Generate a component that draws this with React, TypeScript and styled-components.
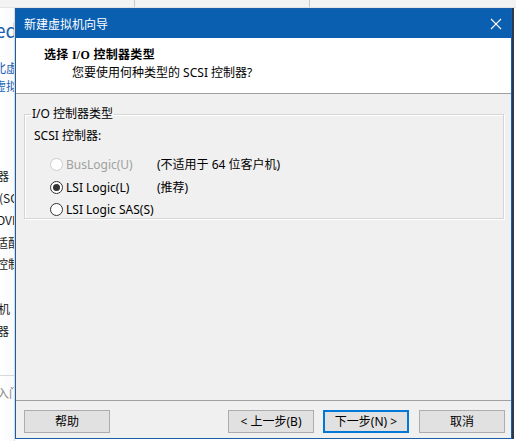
import React from 'react'
import styled, { createGlobalStyle } from 'styled-components'

const GlobalStyle = createGlobalStyle`
  html, body {
    margin: 0;
    padding: 0;
    background: #ffffff;
  }
  body {
    font-family: "Noto Sans", "Noto Sans CJK SC", sans-serif;
    font-size: 12px;
    color: #000;
  }
`

const Desktop = styled.div`
  position: relative;
  width: 516px;
  height: 441px;
  overflow: hidden;
  background: #ffffff;
`

const BackWindow = styled.div`
  display: flex;
  flex-direction: column;
  height: 100%;
`

const BackTabs = styled.div`
  display: flex;
  height: 7px;
  background: #f3f3f3;
  border-bottom: 1px solid #e3e3e3;
`

const BackTab = styled.div<{ $w: number }>`
  width: ${(p) => p.$w}px;
  border-right: 1px solid #c8c8c8;
`

const BackSide = styled.div`
  display: flex;
  flex-direction: column;
  width: 14px;
  flex: 1;
  overflow: hidden;
  border-right: 1px solid #dadada;
  background: linear-gradient(to right, #ffffff, #f7f9fc);
`

const BackLine = styled.div<{ $top: number; $shift: number; $color?: string; $size?: number }>`
  margin-top: ${(p) => p.$top}px;
  margin-left: ${(p) => p.$shift}px;
  height: 16px;
  line-height: 16px;
  white-space: nowrap;
  font-family: "Noto Sans CJK SC", sans-serif;
  font-size: ${(p) => p.$size ?? 12}px;
  color: ${(p) => p.$color ?? '#1a1a1a'};
`

const BackRule = styled.div<{ $top: number }>`
  margin-top: ${(p) => p.$top}px;
  height: 1px;
  background: #d8d8d8;
`

const Dialog = styled.div`
  position: absolute;
  left: 15px;
  top: 8px;
  width: 497px;
  height: 431px;
  box-sizing: border-box;
  border: 1px solid #1a5ea8;
  display: flex;
  flex-direction: column;
  background: #f0f0f0;
  box-shadow: 2px 0 0 #2b3a4a;
`

const TitleBar = styled.div`
  height: 29px;
  background: #0b5fb0;
  display: flex;
  align-items: center;
  justify-content: space-between;
  padding: 0 9px 0 8px;
  color: #ffffff;
  font-family: "Noto Sans CJK SC", sans-serif;
  font-size: 12px;
`

const CloseIcon = styled.svg`
  width: 12px;
  height: 12px;
  display: block;
`

const Header = styled.div`
  height: 56px;
  background: #ffffff;
  border-bottom: 1px solid #a0a0a0;
  display: flex;
  flex-direction: column;
  padding-top: 8px;
  box-sizing: border-box;
`

const HeaderTitle = styled.div`
  margin-left: 28px;
  height: 18px;
  line-height: 18px;
  font-family: "Liberation Serif", "Noto Sans CJK SC", serif;
  font-weight: bold;
  font-size: 12px;
  letter-spacing: 0.3px;
`

const HeaderSub = styled.div`
  margin-left: 56px;
  height: 18px;
  line-height: 18px;
  font-family: "Noto Sans", "Noto Sans CJK SC", sans-serif;
  font-size: 12px;
`

const Body = styled.div`
  flex: 1;
  padding: 12px 7px 0 8px;
`

const Group = styled.fieldset`
  margin: 0;
  padding: 0 0 1px 9px;
  border: 1px solid #d5d5d5;
  box-shadow: inset 1px 1px 0 #ffffff, 1px 1px 0 #ffffff;
`

const Legend = styled.legend`
  margin-left: -3px;
  padding: 0 1px;
  line-height: 16px;
  font-size: 12px;
`

const Fields = styled.div`
  display: flex;
  flex-direction: column;
  gap: 7px;
`

const FieldLabel = styled.div`
  line-height: 16px;
  height: 16px;
  margin-top: 6px;
  margin-bottom: 4px;
`

const RadioRow = styled.label<{ $disabled?: boolean }>`
  display: grid;
  grid-template-columns: 107px auto;
  align-items: center;
  height: 16px;
  margin-left: 16px;
  color: ${(p) => (p.$disabled ? '#a0a0a0' : '#000')};
`

const RadioMain = styled.span`
  display: flex;
  align-items: center;
  gap: 3px;
`

const Circle = styled.span<{ $checked?: boolean; $disabled?: boolean }>`
  width: 13px;
  height: 13px;
  box-sizing: border-box;
  border-radius: 50%;
  border: 1px solid ${(p) => (p.$disabled ? '#cccccc' : '#333333')};
  background: #ffffff;
  display: flex;
  align-items: center;
  justify-content: center;
  &::after {
    content: '';
    display: ${(p) => (p.$checked ? 'block' : 'none')};
    width: 7px;
    height: 7px;
    border-radius: 50%;
    background: #333333;
  }
`

const Note = styled.span`
  color: #000;
`

const Footer = styled.div`
  height: 38px;
  border-top: 1px solid #a0a0a0;
  box-sizing: border-box;
  display: flex;
  align-items: flex-start;
  padding: 9px 6px 0 8px;
`

const Spacer = styled.div`
  flex: 1;
`

const Button = styled.button<{ $primary?: boolean; $gap?: number }>`
  width: 86px;
  height: 23px;
  margin-left: ${(p) => p.$gap ?? 0}px;
  box-sizing: border-box;
  background: #e1e1e1;
  border: 1px solid ${(p) => (p.$primary ? '#0078d7' : '#adadad')};
  box-shadow: ${(p) => (p.$primary ? 'inset 0 0 0 1px #0078d7' : 'none')};
  font-family: "Noto Sans", "Noto Sans CJK SC", sans-serif;
  font-size: 12px;
  color: #000;
  padding: 0;
  line-height: 20px;
`

const sideLines = [
  { top: 14, shift: -5, text: 'ed', color: '#1c62b4', size: 19 },
  { top: 22, shift: -6, text: '北虚拟', color: '#1c62b4' },
  { top: 2, shift: -6, text: '虚拟机', color: '#1c62b4' },
  { top: 74, shift: -3, text: '器', color: '#1a1a1a' },
  { top: 6, shift: -1, text: '(SCSI)', color: '#1a1a1a' },
  { top: 6, shift: -3, text: 'DVD', color: '#1a1a1a' },
  { top: 7, shift: -4, text: '适配器', color: '#1a1a1a' },
  { top: 5, shift: -4, text: '控制器', color: '#1a1a1a' },
  { top: 29, shift: -2, text: '机', color: '#1a1a1a' },
  { top: 6, shift: -3, text: '器', color: '#1a1a1a' }
]

const App: React.FC = () => {
  return (
    <Desktop>
      <GlobalStyle />
      <BackWindow>
        <BackTabs>
          <BackTab $w={134} />
          <BackTab $w={174} />
        </BackTabs>
        <BackSide>
          {sideLines.map((l, i) => (
            <BackLine key={i} $top={l.top} $shift={l.shift} $color={l.color} $size={l.size}>
              {l.text}
            </BackLine>
          ))}
          <BackRule $top={36} />
          <BackLine $top={9} $shift={-3} $color="#8a8a8a">
            入门
          </BackLine>
        </BackSide>
      </BackWindow>

      <Dialog>
        <TitleBar>
          <span>新建虚拟机向导</span>
          <CloseIcon viewBox="0 0 12 12">
            <path d="M1 1 L11 11 M11 1 L1 11" stroke="#ffffff" strokeWidth="1.1" fill="none" />
          </CloseIcon>
        </TitleBar>
        <Header>
          <HeaderTitle>选择 I/O 控制器类型</HeaderTitle>
          <HeaderSub>您要使用何种类型的 SCSI 控制器?</HeaderSub>
        </Header>
        <Body>
          <Group>
            <Legend>I/O 控制器类型</Legend>
            <Fields>
              <FieldLabel>SCSI 控制器:</FieldLabel>
              <RadioRow $disabled>
                <RadioMain>
                  <Circle $disabled />
                  BusLogic(U)
                </RadioMain>
                <Note>(不适用于 64 位客户机)</Note>
              </RadioRow>
              <RadioRow>
                <RadioMain>
                  <Circle $checked />
                  LSI Logic(L)
                </RadioMain>
                <Note>(推荐)</Note>
              </RadioRow>
              <RadioRow>
                <RadioMain>
                  <Circle />
                  LSI Logic SAS(S)
                </RadioMain>
                <span />
              </RadioRow>
            </Fields>
          </Group>
        </Body>
        <Footer>
          <Button>帮助</Button>
          <Spacer />
          <Button>&lt; 上一步(B)</Button>
          <Button $primary $gap={9}>
            下一步(N) &gt;
          </Button>
          <Button $gap={10}>取消</Button>
        </Footer>
      </Dialog>
    </Desktop>
  )
}

export default App
